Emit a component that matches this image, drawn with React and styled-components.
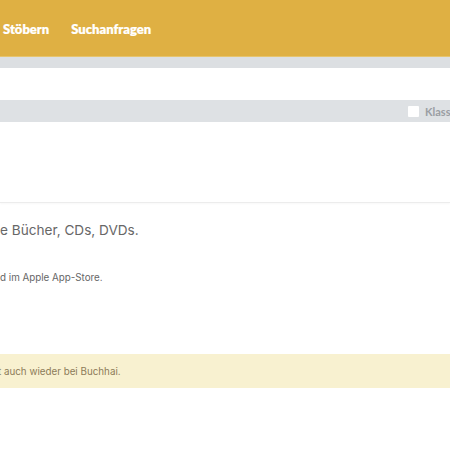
import React from "react";
import styled, { createGlobalStyle } from "styled-components";

const GlobalStyle = createGlobalStyle`
  html, body {
    margin: 0;
    padding: 0;
    background: #fff;
    font-family: Inter, "Liberation Sans", sans-serif;
    overflow: hidden;
  }
`;

function App() {
  return (
    <Page>
      <GlobalStyle />
      <Header>
        <NavLink>Stöbern</NavLink>
        <NavLink>Suchanfragen</NavLink>
      </Header>
      <Band />
      <Spacer />
      <FilterBar>
        <Check />
        <CheckLabel>Klassik</CheckLabel>
      </FilterBar>
      <Hero />
      <Content>
        <Lead>e Bücher, CDs, DVDs.</Lead>
        <Small>d im Apple App-Store.</Small>
      </Content>
      <Notice>
        <NoticeText>t auch wieder bei Buchhai.</NoticeText>
      </Notice>
    </Page>
  );
}

const Page = styled.div`
  width: 450px;
  height: 450px;
  overflow: hidden;
`;

const Header = styled.header`
  height: 56px;
  background: #dfb043;
  border-bottom: 1px solid #e6c46e;
  display: flex;
  align-items: center;
  gap: 22px;
  padding-left: 3px;
`;

const NavLink = styled.a`
  font-family: Lato, "Liberation Sans", sans-serif;
  font-weight: 800;
  font-size: 13px;
  color: #fff;
  margin-top: 1px;
  -webkit-text-stroke: 0.2px #fff;
`;

const Band = styled.div`
  height: 11px;
  background: #dcdfe2;
`;

const Spacer = styled.div`
  height: 32px;
  background: #fff;
`;

const FilterBar = styled.div`
  height: 22px;
  background: #dee1e4;
  display: flex;
  align-items: center;
  gap: 6px;
  padding-left: 408px;
  white-space: nowrap;
  overflow: hidden;
`;

const Check = styled.span`
  flex: none;
  width: 11px;
  height: 11px;
  background: #fff;
  border-radius: 1px;
`;

const CheckLabel = styled.span`
  font-family: Lato, "Liberation Sans", sans-serif;
  font-size: 11px;
  font-weight: 700;
  color: #9a9ea3;
`;

const Hero = styled.div`
  height: 80px;
  border-bottom: 1px solid #ececec;
  box-shadow: 0 1px 2px rgba(0, 0, 0, 0.03);
`;

const Content = styled.div`
  padding-top: 17px;
  height: 134px;
`;

const Lead = styled.p`
  margin: 0;
  font-size: 13.6px;
  color: #676767;
  line-height: 20px;
`;

const Small = styled.p`
  margin: 31px 0 0;
  font-size: 9.8px;
  color: #666;
  line-height: 14px;
`;

const Notice = styled.div`
  height: 34px;
  background: #f8f1d0;
  display: flex;
  align-items: center;
`;

const NoticeText = styled.span`
  font-size: 9.8px;
  color: #8c7b58;
  margin-left: -2px;
`;

export default App;
